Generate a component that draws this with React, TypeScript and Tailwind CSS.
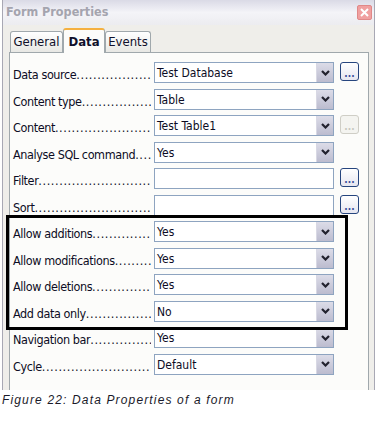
import React from "react";

const FONT = { fontFamily: '"DejaVu Sans Condensed", "DejaVu Sans", Tahoma, sans-serif' };

function Chevron() {
  return (
    <svg width="9" height="6" viewBox="0 0 9 6">
      <path d="M1 1 L4.5 4.5 L8 1" fill="none" stroke="#22222e" strokeWidth="2.2" />
    </svg>
  );
}

function Dots() {
  return (
    <span className="flex-1 min-w-0 overflow-hidden whitespace-nowrap text-clip tracking-[0.6px]">
      ..........................................................................
    </span>
  );
}

function EllipsisBtn({ disabled }: { disabled?: boolean }) {
  return (
    <div
      className={
        "w-[19px] h-[19px] rounded-[3px] border flex items-end justify-center " +
        (disabled
          ? "border-[#cfcec6] bg-[#f4f4f0] text-[#c8c8c0]"
          : "border-[#26457e] bg-gradient-to-b from-[#ffffff] to-[#e6e6f0] text-[#3a4f9a]")
      }
    >
      <span className="text-[10px] leading-[12px] font-bold">...</span>
    </div>
  );
}

type Row = { label: string; value: string; dropdown: boolean; btn?: "on" | "off" };

const rows: Row[] = [
  { label: "Data source", value: "Test Database", dropdown: true, btn: "on" },
  { label: "Content type", value: "Table", dropdown: true },
  { label: "Content", value: "Test Table1", dropdown: true, btn: "off" },
  { label: "Analyse SQL command", value: "Yes", dropdown: true },
  { label: "Filter", value: "", dropdown: false, btn: "on" },
  { label: "Sort", value: "", dropdown: false, btn: "on" },
  { label: "Allow additions", value: "Yes", dropdown: true },
  { label: "Allow modifications", value: "Yes", dropdown: true },
  { label: "Allow deletions", value: "Yes", dropdown: true },
  { label: "Add data only", value: "No", dropdown: true },
  { label: "Navigation bar", value: "Yes", dropdown: true },
  { label: "Cycle", value: "Default", dropdown: true },
];

function FormRow({ r }: { r: Row }) {
  return (
    <div className="flex h-[21px] items-stretch">
      <div className="w-[141px] flex items-end pr-[3px] text-[12.5px] leading-[16px] text-[#0c0c24]">
        <span className="whitespace-nowrap tracking-[-0.4px]">{r.label}</span>
        <Dots />
      </div>
      <div className="w-[180px] h-[21px] border border-[#8ea4c0] bg-white flex items-stretch">
        <div className="flex-1 pl-[2px] pt-[3px] text-[12px] leading-[14px] text-[#0c0c24] whitespace-nowrap">
          {r.value}
        </div>
        {r.dropdown && (
          <div className="w-[17px] border-l border-[#d8d8e4] bg-gradient-to-b from-[#dcdce8] to-[#bcbccf] flex items-center justify-center">
            <Chevron />
          </div>
        )}
      </div>
      <div className="w-[6px]" />
      {r.btn && <EllipsisBtn disabled={r.btn === "off"} />}
    </div>
  );
}

export default function App() {
  return (
    <div className="w-[379px] h-[422px] bg-white relative overflow-hidden" style={FONT}>
      <div className="ml-[2px] w-[373px] h-[390px] border-l border-r border-[#a8a8b4] bg-[#efeeea] flex flex-col">
        {/* title bar */}
        <div className="h-[25px] flex items-center justify-between pl-[3px] pr-[2px] bg-gradient-to-b from-[#dadae6] via-[#f4f4f8] to-[#ececf0]">
          <span className="text-[12.5px] font-bold text-[#a4a4ae]">Form Properties</span>
          <div className="w-[15px] h-[15px] rounded-[2px] bg-[#f0a0a0] border border-[#e08888] flex items-center justify-center">
            <svg width="9" height="9" viewBox="0 0 9 9">
              <path d="M1 1 L8 8 M8 1 L1 8" stroke="#ffffff" strokeWidth="2" />
            </svg>
          </div>
        </div>
        {/* body */}
        <div className="flex-1 px-[6px] pt-[3px] flex flex-col">
          {/* tabs */}
          <div className="flex items-end h-[24px] pl-[1px] relative z-10">
            <div className="w-[53px] h-[21px] border border-b-0 border-[#a0a8ac] rounded-t-[3px] bg-gradient-to-b from-[#ffffff] to-[#e8e8e4] text-[13px] text-[#10102a] flex items-center justify-center">
              General
            </div>
            <div className="w-[42px] h-[25px] -mb-[1px] border border-b-0 border-[#a0a8ac] border-t-[2px] border-t-[#f5b040] rounded-t-[3px] bg-[#fcfcfa] text-[13px] font-bold text-[#10102a] flex items-center justify-center">
              Data
            </div>
            <div className="w-[46px] h-[21px] border border-b-0 border-[#a0a8ac] rounded-t-[3px] bg-gradient-to-b from-[#ffffff] to-[#e8e8e4] text-[13px] text-[#10102a] flex items-center justify-center">
              Events
            </div>
          </div>
          <div className="flex-1 w-[360px] border border-b-0 border-[#a0a8ac] bg-[#fcfcfa] pl-[3px] pt-[9px] flex flex-col gap-[5.5px]">
            {rows.map((r) => (
              <FormRow key={r.label} r={r} />
            ))}
          </div>
        </div>
      </div>
      {/* highlight box */}
      <div className="absolute left-[6px] top-[215px] w-[342px] h-[115px] border-[3px] border-black pointer-events-none" />
      <div
        className="absolute left-[2px] top-[391px] text-[12px] italic tracking-[1.15px] text-[#1a1a2a]"
        style={{ fontFamily: '"Liberation Sans", Arial, sans-serif' }}
      >
        Figure 22: Data Properties of a form
      </div>
    </div>
  );
}
